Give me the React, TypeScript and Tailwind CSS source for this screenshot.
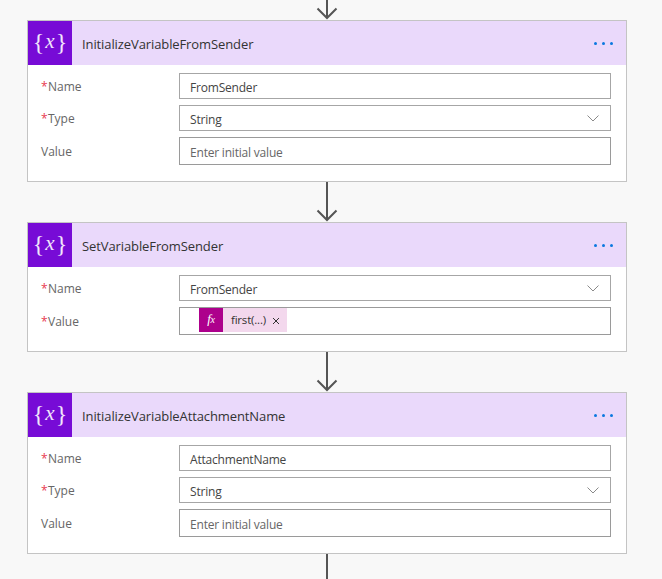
const font = "font-['Open_Sans','Noto_Sans',sans-serif]";

function VarIcon() {
  return (
    <div className="w-11 h-11 shrink-0 bg-[#770bd6] flex items-center justify-center text-white">
      <span className="font-['Liberation_Serif',serif] leading-none text-white/90 -mt-[2px] flex items-center">
        <span className="text-[24px] font-light">{"{"}</span>
        <span className="italic text-[21px] -mt-[1px] px-[1px]">x</span>
        <span className="text-[24px] font-light">{"}"}</span>
      </span>
    </div>
  );
}

function Arrow({ tall = true }: { tall?: boolean }) {
  if (!tall) {
    return (
      <div className="h-[25px] flex justify-center">
        <div className="w-[2px] h-full bg-[#555555]" />
      </div>
    );
  }
  return (
    <div className="h-10 flex justify-center">
      <svg width="22" height="40" viewBox="0 0 22 40" fill="none" stroke="#555555" strokeWidth="2">
        <path d="M11 0V38" />
        <path d="M1.5 28.5L11 38L20.5 28.5" />
      </svg>
    </div>
  );
}

function Field({ label, required, tall, children }: { label: string; required?: boolean; tall?: boolean; children: React.ReactNode }) {
  return (
    <div className="flex items-center">
      <div className="w-[151px] pl-[13px] pt-[2px] text-[12px] text-[#666666] flex items-center">
        {required && <span className="text-[#e8384f] w-[7px] text-[12px]">*</span>}
        {label}
      </div>
      <div className={`w-[432px] ${tall ? "h-7 border-[#9a9a9a]" : "h-[26px] border-[#a6a6a6]"} border flex items-center pl-[10px] pr-[11px] pt-[3px] text-[12px] -tracking-[0.2px] text-[#444444]`}>
        {children}
      </div>
    </div>
  );
}

function Chevron() {
  return (
    <svg className="ml-auto mb-[2px]" width="12" height="7" viewBox="0 0 12 7" fill="none" stroke="#8a8a8a" strokeWidth="1">
      <path d="M0.5 0.5L6 6L11.5 0.5" />
    </svg>
  );
}

function Card({ title, children }: { title: string; children: React.ReactNode }) {
  return (
    <div className="border border-[#c4c4c4] bg-white">
      <div className="h-11 bg-[#ead9fb] flex items-center">
        <VarIcon />
        <span className="ml-[10px] pt-[3px] text-[13px] -tracking-[0.1px] text-[#333333]">{title}</span>
        <div className="ml-auto mr-[13px] flex gap-[5px]">
          <span className="w-[3px] h-[3px] rounded-full bg-[#0a78e0]" />
          <span className="w-[3px] h-[3px] rounded-full bg-[#0a78e0]" />
          <span className="w-[3px] h-[3px] rounded-full bg-[#0a78e0]" />
        </div>
      </div>
      <div className="pt-2 flex flex-col gap-[6px]">{children}</div>
    </div>
  );
}

export default function App() {
  return (
    <div className={`${font} w-[662px] h-[579px] overflow-hidden bg-[#f8f8f8] px-[27px]`}>
      <div className="w-[600px]">
        <div className="h-5 flex justify-center overflow-hidden">
          <svg width="22" height="20" viewBox="0 0 22 20" fill="none" stroke="#555555" strokeWidth="2">
            <path d="M11 -20V18" />
            <path d="M1.5 8.5L11 18L20.5 8.5" />
          </svg>
        </div>
        <Card title="InitializeVariableFromSender">
          <Field label="Name" required>FromSender</Field>
          <Field label="Type" required>String<Chevron /></Field>
          <Field label="Value" tall><span className="text-[#666666]">Enter initial value</span></Field>
          <div className="h-[10px]" />
        </Card>
        <Arrow />
        <Card title="SetVariableFromSender">
          <Field label="Name" required>FromSender<Chevron /></Field>
          <Field label="Value" required tall>
            <div className="ml-[9px] h-6 self-start -mt-[3px] flex items-center bg-[#f3d8ed]">
              <div className="w-6 h-6 bg-[#ad008c] flex items-baseline justify-center pt-[4px] text-white font-['Liberation_Serif',serif] italic text-[13px] leading-none">
                f<span className="text-[10px]">x</span>
              </div>
              <span className="ml-2 text-[#333333] text-[11.5px]">first(...)</span>
              <svg className="ml-[6px] mr-[7px] mt-[2px]" width="8" height="8" viewBox="0 0 8 8" fill="none" stroke="#333333" strokeWidth="1">
                <path d="M1 1L7 7M7 1L1 7" />
              </svg>
            </div>
          </Field>
          <div className="h-[10px]" />
        </Card>
        <Arrow />
        <Card title="InitializeVariableAttachmentName">
          <Field label="Name" required>AttachmentName</Field>
          <Field label="Type" required>String<Chevron /></Field>
          <Field label="Value" tall><span className="text-[#666666]">Enter initial value</span></Field>
          <div className="h-[10px]" />
        </Card>
        <Arrow tall={false} />
      </div>
    </div>
  );
}
